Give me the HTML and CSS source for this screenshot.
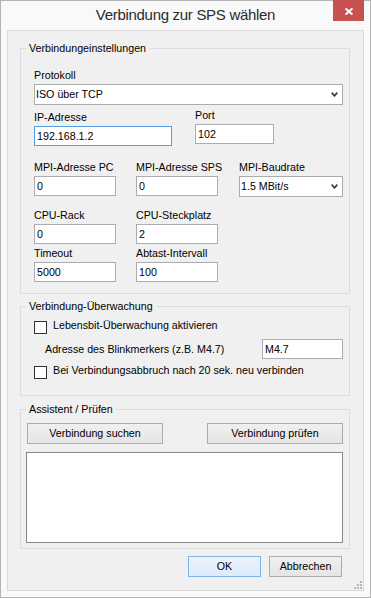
FILE: index.html
```html
<!DOCTYPE html>
<html lang="de">
<head>
<meta charset="utf-8">
<title>Verbindung zur SPS wählen</title>
<link rel="stylesheet" href="styles.css">
</head>
<body>
<div class="window">
  <div class="titlebar">
    <div class="title">Verbindung zur SPS wählen</div>
    <div class="close">
      <svg width="8" height="7" viewBox="0 0 8 7"><path d="M0.6 0.4 L7.4 6.6 M7.4 0.4 L0.6 6.6" stroke="#fff" stroke-width="1.9" fill="none"/></svg>
    </div>
  </div>
  <div class="client">
    <div class="group g1">
      <div class="legend">Verbindungeinstellungen</div>
      <div class="gbody b13">
        <div class="field f-proto">
          <div class="lbl">Protokoll</div>
          <div class="combo w309"><span>ISO über TCP</span><svg class="chev" width="7" height="5" viewBox="0 0 7 5"><path d="M0.7 0.7 L3.5 3.8 L6.3 0.7" stroke="#404040" stroke-width="1.8" fill="none"/></svg></div>
        </div>
        <div class="row-ip">
          <div class="field f-ip">
            <div class="lbl">IP-Adresse</div>
            <div class="input focus w138">192.168.1.2</div>
          </div>
          <div class="field f-port">
            <div class="lbl">Port</div>
            <div class="input w79">102</div>
          </div>
        </div>
        <div class="grid3 r-mpi">
          <div class="field">
            <div class="lbl">MPI-Adresse PC</div>
            <div class="input w82">0</div>
          </div>
          <div class="field">
            <div class="lbl">MPI-Adresse SPS</div>
            <div class="input w82">0</div>
          </div>
          <div class="field">
            <div class="lbl">MPI-Baudrate</div>
            <div class="combo w104"><span>1.5 MBit/s</span><svg class="chev" width="7" height="5" viewBox="0 0 7 5"><path d="M0.7 0.7 L3.5 3.8 L6.3 0.7" stroke="#404040" stroke-width="1.8" fill="none"/></svg></div>
          </div>
        </div>
        <div class="grid3 r-cpu">
          <div class="field">
            <div class="lbl">CPU-Rack</div>
            <div class="input w82">0</div>
          </div>
          <div class="field">
            <div class="lbl">CPU-Steckplatz</div>
            <div class="input w82">2</div>
          </div>
        </div>
        <div class="grid3 r-time">
          <div class="field">
            <div class="lbl">Timeout</div>
            <div class="input w82">5000</div>
          </div>
          <div class="field">
            <div class="lbl">Abtast-Intervall</div>
            <div class="input w82">100</div>
          </div>
        </div>
      </div>
    </div>

    <div class="group g2">
      <div class="legend">Verbindung-Überwachung</div>
      <div class="gbody b13">
        <div class="check c1">
          <span class="cb"></span>
          <span class="cblabel">Lebensbit-Überwachung aktivieren</span>
        </div>
        <div class="addr">
          <span class="lbl-inline">Adresse des Blinkmerkers (z.B. M4.7)</span>
          <div class="input w81">M4.7</div>
        </div>
        <div class="check c2">
          <span class="cb"></span>
          <span class="cblabel">Bei Verbindungsabbruch nach 20 sek. neu verbinden</span>
        </div>
      </div>
    </div>

    <div class="group g3">
      <div class="legend">Assistent / Prüfen</div>
      <div class="gbody b5">
        <div class="btnrow">
          <div class="btn w136 first">Verbindung suchen</div>
          <div class="btn w136">Verbindung prüfen</div>
        </div>
        <div class="list"></div>
      </div>
    </div>

    <div class="footer">
      <div class="btn w73 default">OK</div>
      <div class="btn w73">Abbrechen</div>
    </div>

    <svg class="grip" width="10" height="10" viewBox="0 0 10 10">
      <g fill="#b8b8b8">
        <rect x="7" y="1" width="2" height="2"/>
        <rect x="4" y="4" width="2" height="2"/>
        <rect x="7" y="4" width="2" height="2"/>
        <rect x="1" y="7" width="2" height="2"/>
        <rect x="4" y="7" width="2" height="2"/>
        <rect x="7" y="7" width="2" height="2"/>
      </g>
    </svg>
  </div>
</div>
</body>
</html>
```

FILE: styles.css
```css
* { box-sizing: border-box; }

html, body {
  margin: 0;
  padding: 0;
}

body {
  width: 371px;
  height: 598px;
  font-family: "Liberation Sans", Arial, sans-serif;
  font-size: 10.7px;
  color: #000;
  background: #fff;
}

.window {
  width: 371px;
  height: 598px;
  border: 1px solid #b4b4b4;
  background: #f9f9f9;
  padding: 0 6px 6px;
  display: flex;
  flex-direction: column;
}

.titlebar {
  height: 29px;
  flex: none;
  display: grid;
  grid-template-columns: 1fr auto 1fr;
  align-items: start;
}

.title {
  grid-column: 2;
  font-size: 15px;
  letter-spacing: -0.3px;
  line-height: 18px;
  padding-top: 5px;
  color: #2b2b2b;
  white-space: nowrap;
}

.close {
  grid-column: 3;
  justify-self: end;
  width: 31px;
  height: 21px;
  margin-top: -1px;
  background: #c75050;
  display: flex;
  align-items: center;
  justify-content: center;
  padding-top: 2px;
}

.close svg { display: block; }

.client {
  flex: 1;
  border: 1px solid #dadada;
  background: #f0f0f0;
  position: relative;
}

.group {
  margin-left: 12px;
  width: 330px;
  border: 1px solid #dcdcdc;
  padding: 0 6px 0 0;
}

.g1 { margin-top: 17px; padding-bottom: 11px; }
.g2 { margin-top: 12px; padding-bottom: 16px; }
.g3 { margin-top: 13px; padding-bottom: 5px; }

.legend {
  display: table;
  margin: -7px 0 0 5px;
  padding: 0 3px;
  line-height: 13px;
  background: #f0f0f0;
  white-space: nowrap;
}

.b13 { padding-left: 13px; }
.b5 { padding-left: 5px; }

.field {
  display: flex;
  flex-direction: column;
  align-items: flex-start;
}

.lbl {
  line-height: 13px;
  margin-bottom: 2px;
  white-space: nowrap;
}

.input {
  height: 20px;
  border: 1px solid #abadb3;
  background: #fff;
  padding: 0 2px;
  line-height: 18px;
  white-space: nowrap;
}

.input.focus { border-color: #569de5; }

.combo {
  height: 21px;
  border: 1px solid #acacac;
  background: #fff;
  display: flex;
  align-items: center;
  justify-content: space-between;
  padding: 0 4px 0 1px;
  line-height: 13px;
  white-space: nowrap;
}

.chev { display: block; flex: none; }

.w309 { width: 309px; }
.w138 { width: 138px; }
.w79 { width: 79px; }
.w82 { width: 82px; }
.w81 { width: 81px; }
.w104 { width: 104px; }
.w136 { width: 136px; }
.w73 { width: 73px; }

.f-proto { margin-top: 14px; }

.row-ip {
  display: grid;
  grid-template-columns: 161px 79px;
  align-items: start;
}

.f-ip { margin-top: 6px; }
.f-port { margin-top: 4px; }

.grid3 {
  display: grid;
  grid-template-columns: 102px 103px 104px;
  align-items: start;
}

.r-mpi { margin-top: 15px; }
.r-cpu { margin-top: 12px; }
.r-time { margin-top: 3px; }

.check {
  display: flex;
  align-items: flex-start;
  height: 13px;
}

.c1 { margin-top: 8px; }
.c2 { margin-top: 7px; }

.cb {
  width: 13px;
  height: 13px;
  border: 1px solid #333;
  background: #fff;
  flex: none;
}

.cblabel {
  margin-left: 6px;
  margin-top: -2px;
  line-height: 13px;
  white-space: nowrap;
}

.addr {
  margin-top: 5px;
  padding-left: 11px;
  display: grid;
  grid-template-columns: 217px 81px;
  align-items: center;
}

.lbl-inline {
  line-height: 13px;
  white-space: nowrap;
}

.btnrow {
  margin-top: 7px;
  display: flex;
  justify-content: space-between;
}

.btn {
  height: 21px;
  border: 1px solid #acacac;
  background: linear-gradient(#f0f0f0, #e5e5e5);
  display: flex;
  align-items: center;
  justify-content: center;
  line-height: 13px;
  white-space: nowrap;
}

.btn.first { margin-left: 1px; }

.btn.default {
  border-color: #7eb4ea;
  background: linear-gradient(#ecf4fc, #dcecfc);
}

.list {
  margin-top: 8px;
  height: 91px;
  border: 1px solid #828790;
  background: #fff;
}

.footer {
  margin: 7px 21px 0 0;
  display: flex;
  justify-content: flex-end;
  gap: 8px;
}

.grip {
  position: absolute;
  right: 0;
  bottom: 0;
  display: block;
}
```
